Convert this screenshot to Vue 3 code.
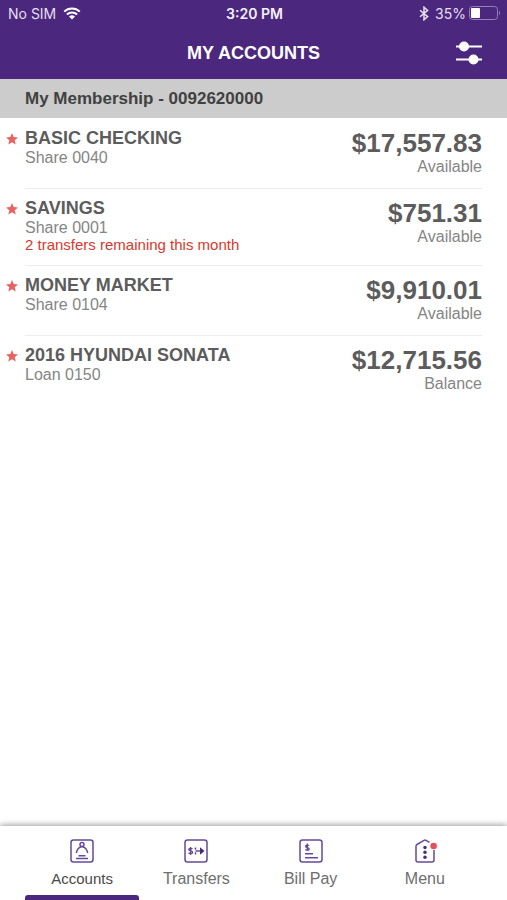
<template>
  <div class="app">
    <header class="top">
      <div class="status">
        <div class="status-left">
          <span>No SIM</span>
          <svg class="wifi" viewBox="0 0 18 13" aria-hidden="true">
            <path d="M1.2 4.6a11.2 11.2 0 0 1 15.6 0" />
            <path d="M3.9 7.5a7.3 7.3 0 0 1 10.2 0" />
            <path class="solid" d="M9 12.6 6 9.6a4.3 4.3 0 0 1 6 0z" />
          </svg>
        </div>
        <div class="status-time">3:20 PM</div>
        <div class="status-right">
          <svg class="bluetooth" viewBox="0 0 10 15" aria-hidden="true">
            <path d="M1 4.2 8.6 10.6 5 13.8V1.2L8.6 4.4 1 10.8" />
          </svg>
          <span>35%</span>
          <svg class="battery" viewBox="0 0 32 14" aria-hidden="true">
            <rect class="shell" x="0.5" y="0.5" width="28" height="13" rx="3" />
            <rect class="charge" x="2" y="2" width="9" height="10" rx="1" />
            <path class="tip" d="M30 5v4a2.4 2.4 0 0 0 0-4z" />
          </svg>
        </div>
      </div>
      <div class="title-bar">
        <h1>MY ACCOUNTS</h1>
        <button class="filter" type="button" aria-label="Filter accounts">
          <svg viewBox="0 0 28 26" aria-hidden="true">
            <path d="M1 6.5h26M1 19.5h26" />
            <circle cx="9" cy="6.5" r="5" />
            <circle cx="18.5" cy="19.5" r="5" />
          </svg>
        </button>
      </div>
    </header>

    <main>
      <h2 class="membership">My Membership - 0092620000</h2>
      <ul class="accounts">
        <li class="account" v-for="account in accounts" :key="account.id">
          <svg class="star" viewBox="0 0 12 12" aria-hidden="true">
            <path
              d="M6 0l1.7 4 4.3.4-3.3 2.900 1 4.300L6 9.300l-3.700 2.300 1-4.300L0 4.400 4.300 4z"
            />
          </svg>
          <div class="account-body">
            <div class="account-info">
              <h3>{{ account.name }}</h3>
              <p class="account-id">{{ account.id }}</p>
              <p class="account-note" v-if="account.note">{{ account.note }}</p>
            </div>
            <div class="account-money">
              <div class="amount">{{ account.amount }}</div>
              <div class="amount-label">{{ account.label }}</div>
            </div>
          </div>
        </li>
      </ul>
    </main>

    <nav class="tabs">
      <button
        v-for="tab in tabs"
        :key="tab"
        type="button"
        class="tab"
        :class="{ active: tab === activeTab }"
        @click="activeTab = tab"
      >
        <svg class="tab-icon" viewBox="0 0 24 24" aria-hidden="true">
          <rect
            v-if="tab !== 'Menu'"
            x="1"
            y="1"
            width="22"
            height="22"
            rx="2.5"
          />
          <template v-if="tab === 'Accounts'">
            <circle cx="12" cy="5.6" r="2" />
            <path d="M6.3 14c.8-3.600 2.600-5.800 5.700-6.400 3.100.6 4.900 2.800 5.700 6.400" />
            <path d="M8.500 16.700h7M6 19.500h12" />
          </template>
          <template v-else-if="tab === 'Transfers'">
            <path
              class="fine"
              d="M8.400 10c-.6-.7-3.600-1-3.600.6 0 1.700 3.800.9 3.800 2.700 0 1.700-3.200 1.400-4 .4M6.600 8v8"
            />
            <path d="M11.500 8.500v2.200M11.500 13.300v2.200M11.500 12h7" />
            <path class="filled" d="M16 8.300 20.500 12 16 15.700z" />
          </template>
          <template v-else-if="tab === 'Bill Pay'">
            <path
              class="fine"
              d="M10 6.700c-.6-.8-3.400-1-3.400.6 0 1.700 3.600.9 3.600 2.700 0 1.700-3 1.400-3.800.4M8.300 4.500v7.600"
            />
            <path d="M6 14.800h8M6 18.800h13" />
          </template>
          <template v-else>
            <path
              d="M21 11v10a2 2 0 0 1-2 2H5a2 2 0 0 1-2-2V7.200a2 2 0 0 1 1-1.700L11 1.300a2 2 0 0 1 2 0l3.500 2.100"
            />
            <circle class="filled" cx="12" cy="8.500" r="1.700" />
            <circle class="filled" cx="12" cy="13.300" r="1.700" />
            <circle class="filled" cx="12" cy="18.200" r="1.700" />
            <circle class="badge" cx="20.600" cy="7" r="3.300" />
          </template>
        </svg>
        <span>{{ tab }}</span>
      </button>
    </nav>
  </div>
</template>

<script setup>
import { ref } from "vue";

const activeTab = ref("Accounts");
const tabs = ["Accounts", "Transfers", "Bill Pay", "Menu"];

const accounts = [
  {
    id: "Share 0040",
    name: "BASIC CHECKING",
    amount: "$17,557.83",
    label: "Available",
  },
  {
    id: "Share 0001",
    name: "SAVINGS",
    note: "2 transfers remaining this month",
    amount: "$751.31",
    label: "Available",
  },
  {
    id: "Share 0104",
    name: "MONEY MARKET",
    amount: "$9,910.01",
    label: "Available",
  },
  {
    id: "Loan 0150",
    name: "2016 HYUNDAI SONATA",
    amount: "$12,715.56",
    label: "Balance",
  },
];
</script>

<style>
body {
  margin: 0;
  background: #fff;
}
</style>

<style scoped>
.app {
  display: flex;
  flex-direction: column;
  min-height: 100vh;
  font-family: "Liberation Sans", Arial, sans-serif;
  color: #5c5c5c;
}
h1,
h2,
h3,
p,
ul {
  margin: 0;
  padding: 0;
}
.top {
  background: #4b287e;
  color: #fff;
}
.status {
  display: grid;
  grid-template-columns: 1fr auto 1fr;
  align-items: center;
  height: 26px;
  padding: 0 6px 0 8px;
  font-family: Inter, sans-serif;
  font-size: 14px;
  color: #e6dff0;
}
.status-left,
.status-right {
  display: flex;
  align-items: center;
  gap: 7px;
}
.status-right {
  justify-content: flex-end;
  gap: 3px;
}
.status-time {
  font-weight: 600;
  color: #f5f1fa;
}
.wifi {
  width: 18px;
  height: 13px;
  fill: none;
  stroke: #fff;
  stroke-width: 2;
}
.wifi .solid {
  fill: #fff;
  stroke: none;
}
.bluetooth {
  width: 10px;
  height: 15px;
  margin-right: 3px;
  fill: none;
  stroke: #e6dff0;
  stroke-width: 1.5;
}
.battery {
  width: 32px;
  height: 14px;
}
.shell {
  fill: none;
  stroke: #9580b5;
}
.charge {
  fill: #fff;
}
.tip {
  fill: #9580b5;
}
.title-bar {
  display: grid;
  grid-template-columns: 1fr auto 1fr;
  align-items: center;
  height: 53px;
  padding: 0 24px;
}
.title-bar h1 {
  grid-column: 2;
  font-size: 18px;
  line-height: 20px;
}
.filter {
  justify-self: end;
  display: flex;
  padding: 0;
  border: 0;
  background: none;
  cursor: pointer;
}
.filter svg {
  width: 28px;
  height: 26px;
  fill: #fff;
  stroke: #fff;
  stroke-width: 2;
}
.filter circle {
  stroke: none;
}
main {
  flex: 1;
}
.membership {
  padding: 0 25px;
  background: #ccc;
  color: #414141;
  font-size: 17px;
  line-height: 39px;
}
.accounts {
  list-style: none;
}
.account {
  display: flex;
  padding: 0 25px 0 6px;
}
.star {
  flex: none;
  width: 12px;
  height: 12px;
  margin: 15px 7px 0 0;
  fill: #e8635f;
}
.account-body {
  flex: 1;
  display: flex;
  justify-content: space-between;
  box-sizing: border-box;
  min-height: 70px;
  padding: 10px 0 11px;
}
.account + .account .account-body {
  padding-top: 9px;
  padding-bottom: 12px;
  border-top: 1px solid #ececec;
}
.account-info h3 {
  font-size: 18px;
  line-height: 20px;
}
.account-id {
  color: #858585;
  font-size: 16px;
  line-height: 19px;
}
.account-note {
  color: #d9382c;
  font-size: 15px;
  line-height: 16px;
}
.account-money {
  text-align: right;
}
.amount {
  font-size: 26px;
  font-weight: bold;
  line-height: 30px;
}
.amount-label {
  color: #858585;
  font-size: 16px;
  line-height: 18px;
}
.tabs {
  display: flex;
  padding: 0 25px;
  background: #fff;
  box-shadow: 0 -1px 6px rgba(0, 0, 0, 0.4);
}
.tab {
  flex: 1;
  display: flex;
  flex-direction: column;
  align-items: center;
  height: 74px;
  padding: 13px 0 0;
  border: 0;
  background: none;
  color: #6e6e6e;
  font-family: inherit;
  font-size: 16px;
  line-height: 20px;
  cursor: pointer;
}
.tab span {
  margin-top: 6px;
}
.tab.active {
  color: #4a4a4a;
  font-size: 15px;
}
.tab.active::after {
  content: "";
  align-self: stretch;
  height: 5px;
  margin-top: auto;
  border-radius: 3px 3px 0 0;
  background: #4b287e;
}
.tab-icon {
  flex: none;
  width: 24px;
  height: 24px;
  fill: none;
  stroke: #654a9b;
  stroke-width: 1.5;
  overflow: visible;
}
.tab-icon .fine {
  stroke-width: 1.4;
}
.tab-icon .filled {
  fill: #4b287e;
  stroke: none;
}
.tab-icon .badge {
  fill: #e3525c;
  stroke: none;
}
</style>
